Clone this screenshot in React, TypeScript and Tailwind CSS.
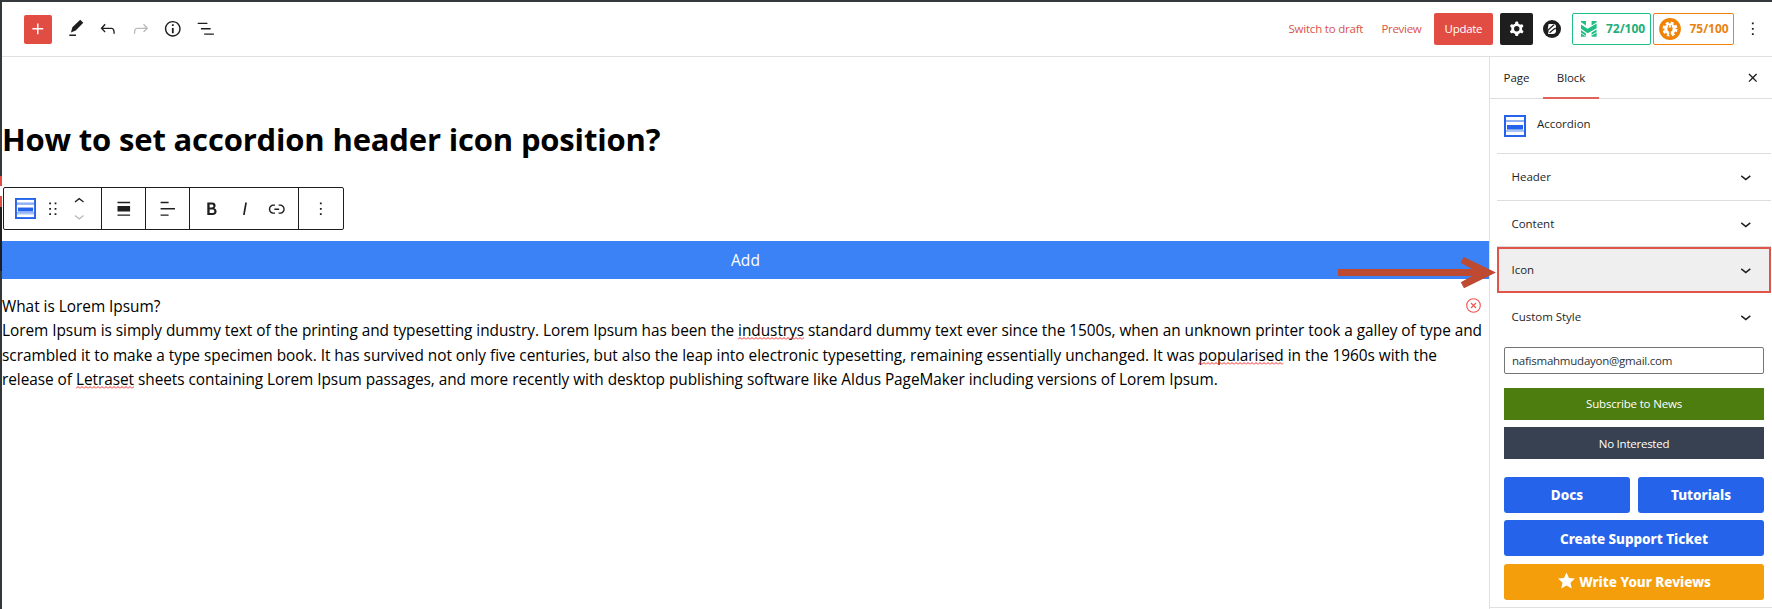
import React from "react";

type IconProps = { d: string; className?: string; evenOdd?: boolean };

function Icon({ d, className = "size-[21.6px]", evenOdd }: IconProps) {
  return (
    <svg viewBox="0 0 24 24" fill="currentColor" className={`block shrink-0 ${className}`}>
      <path d={d} fillRule={evenOdd ? "evenodd" : "nonzero"} />
    </svg>
  );
}

const PLUS = "M18 11.2h-5.2V6h-1.6v5.2H6v1.6h5.2V18h1.6v-5.2H18z";
const EDIT = "M20.3 5.2 16.9 1.9 8.2 10.4 6.6 16.1 11.9 14 20.3 5.2ZM12.2 18.4H4.8V20h7.4v-1.6Z";
const UNDO =
  "M18.3 11.7c-.6-.6-1.4-.9-2.3-.9H6.7l2.9-3.3-1.1-1-4.5 5L8.5 16l1-1-2.7-2.7H16c.5 0 .9.2 1.3.5 1 1 1 3.4 1 4.5v.3h1.5v-.2c0-1.5 0-4.3-1.5-5.7z";
const REDO =
  "M15.6 6.5l-1.1 1 2.9 3.3H8c-.9 0-1.7.3-2.3.9-1.4 1.5-1.4 4.2-1.4 5.6v.2h1.5v-.3c0-1.1 0-3.5 1-4.5.3-.3.7-.5 1.3-.5h9.2L14.5 15l1.1 1.1 4.6-4.6-4.6-5z";
const INFO =
  "M12 3.2c-4.8 0-8.8 3.9-8.8 8.8 0 4.8 3.9 8.8 8.8 8.8 4.8 0 8.8-3.9 8.8-8.8 0-4.8-4-8.8-8.8-8.8zm0 16c-4 0-7.2-3.3-7.2-7.2C4.8 8 8 4.8 12 4.8s7.2 3.3 7.2 7.2c0 4-3.2 7.2-7.2 7.2zM11 17h2v-6h-2v6zm0-8h2V7h-2v2z";
const LIST = "M13.8 5.2H3v1.5h10.8V5.2zm-3.6 12v1.5H21v-1.5H10.2zm7.2-6H6.6v1.5h10.8v-1.5z";
const COG =
  "M10.289 4.836A1 1 0 0111.275 4h1.306a1 1 0 01.987.836l.244 1.466c.787.26 1.503.679 2.108 1.218l1.393-.522a1 1 0 011.216.437l.653 1.13a1 1 0 01-.23 1.273l-1.148.944a6.025 6.025 0 010 2.435l1.149.946a1 1 0 01.23 1.272l-.653 1.13a1 1 0 01-1.216.437l-1.394-.522c-.605.54-1.32.958-2.108 1.218l-.244 1.466a1 1 0 01-.987.836h-1.306a1 1 0 01-.986-.836l-.244-1.466a5.995 5.995 0 01-2.108-1.218l-1.394.522a1 1 0 01-1.217-.436l-.653-1.131a1 1 0 01.23-1.272l1.149-.946a6.026 6.026 0 010-2.435l-1.148-.944a1 1 0 01-.23-1.272l.653-1.131a1 1 0 011.217-.437l1.393.522a5.994 5.994 0 012.108-1.218l.244-1.466zM14.929 12a3 3 0 11-6 0 3 3 0 016 0z";
const MORE = "M13 19h-2v-2h2v2zm0-6h-2v-2h2v2zm0-6h-2V5h2v2z";
const DRAG =
  "M8 7h2V5H8v2zm0 6h2v-2H8v2zm0 6h2v-2H8v2zm6-14v2h2V5h-2zm0 8h2v-2h-2v2zm0 6h2v-2h-2v2z";
const UP = "M6.5 12.4L12 8l5.5 4.4-.9 1.2L12 10l-4.5 3.6-1-1.2z";
const DOWN = "M17.5 11.6L12 16l-5.5-4.4.9-1.2L12 14l4.5-3.6 1 1.2z";
const ALIGN_NONE = "M5 15h14V9H5v6zm0 4.8h14v-1.5H5v1.5zM5 4.2v1.5h14V4.2H5z";
const ALIGN_LEFT = "M4 19.8h8.9v-1.5H4v1.5zm8.9-15.6H4v1.5h8.9V4.2zm-8.9 7v1.5h16v-1.5H4z";
const BOLD =
  "M14.7 11.3c1-.6 1.5-1.6 1.5-3 0-2.3-1.3-3.4-4-3.4H7v14h5.8c1.4 0 2.5-.3 3.3-1 .8-.7 1.2-1.7 1.2-2.9.1-1.9-.8-3.1-2.6-3.7zm-5.1-4h2.3c.6 0 1.1.1 1.4.4.3.3.5.7.5 1.2s-.2 1-.5 1.2c-.3.3-.8.4-1.4.4H9.6V7.3zm4.6 9c-.4.3-1 .4-1.7.4H9.6v-3.9h2.9c.7 0 1.3.2 1.7.5.4.3.6.8.6 1.5s-.2 1.2-.6 1.5z";
const ITALIC = "M12.5 5L10 19h1.9l2.5-14z";
const LINK =
  "M15.6 7.2H14v1.5h1.6c2 0 3.7 1.7 3.7 3.7s-1.7 3.7-3.7 3.7H14v1.5h1.6c2.8 0 5.2-2.3 5.2-5.2 0-2.9-2.3-5.2-5.2-5.2zM4.7 12.4c0-2 1.7-3.7 3.7-3.7H10V7.2H8.4c-2.9 0-5.2 2.3-5.2 5.2 0 2.9 2.3 5.2 5.2 5.2H10v-1.5H8.4c-2 0-3.7-1.7-3.7-3.7zm4.6.9h5.3v-1.5H9.3v1.5z";
const CLOSE =
  "M12 13.06l3.712 3.713 1.061-1.06L13.061 12l3.712-3.712-1.06-1.06L12 10.938 8.288 7.227l-1.061 1.06L10.939 12l-3.712 3.712 1.06 1.061L12 13.061z";

function AccordionIcon({ className }: { className: string }) {
  return (
    <svg viewBox="0 0 22 22" className={`block shrink-0 ${className}`}>
      <rect width="22" height="22" fill="#2563eb" />
      <rect x="2" y="2" width="18" height="3" fill="#fff" />
      <rect x="2" y="5" width="18" height="2" fill="#8fb0f6" />
      <rect x="2" y="7" width="18" height="8" fill="#fff" />
      <rect x="3" y="10" width="16" height="4" fill="#2563eb" />
      <rect x="3" y="14" width="16" height="1" fill="#7ba2f4" />
      <rect x="2" y="15" width="18" height="2" fill="#a9c2f8" />
      <rect x="2" y="17" width="18" height="3" fill="#fff" />
    </svg>
  );
}

function Misspelled({ children }: { children: React.ReactNode }) {
  return (
    <span className="relative inline-block leading-[24.33px]">
      {children}
      <svg className="absolute left-0 top-[18px] h-[3px] w-full">
        <defs>
          <pattern id="wave" width="4" height="3" patternUnits="userSpaceOnUse">
            <path d="M0 2.5 2 .5 4 2.5" fill="none" stroke="#f02828" strokeWidth="1" />
          </pattern>
        </defs>
        <rect width="100%" height="3" fill="url(#wave)" />
      </svg>
    </span>
  );
}

function TopBar() {
  return (
    <header className="flex h-[55px] shrink-0 items-center border-b border-[#e0e0e0] pl-[22px] text-[#1e1e1e]">
      <button className="flex h-[29px] w-7 items-center justify-center rounded-[2px] bg-[#e14d43] text-white">
        <Icon d={PLUS} />
      </button>
      <div className="ml-[13px] flex items-center gap-[10.9px]">
        <Icon d={EDIT} />
        <Icon d={UNDO} />
        <Icon d={REDO} className="size-[21.6px] text-[#bbb]" />
        <Icon d={INFO} />
        <Icon d={LIST} />
      </div>
      <div className="ml-auto flex items-center text-[12px]">
        <span className="w-[93px] text-[11.5px] tracking-[-0.2px] text-[#d9534a]">Switch to draft</span>
        <span className="w-[53px] text-[11.5px] tracking-[-0.3px] text-[#d9534a]">Preview</span>
        <button className="h-8 w-[59px] rounded-[2px] bg-[#e14d43] pr-px text-center text-[11.5px] tracking-[-0.3px] text-white">
          Update
        </button>
        <button className="ml-[7px] flex h-8 w-[33px] items-center justify-center rounded-[2px] bg-[#1e1e1e] text-white">
          <Icon d={COG} evenOdd />
        </button>
        <svg viewBox="0 0 18 18" className="ml-[10px] block size-[18px]">
          <circle cx="9" cy="9" r="9" fill="#1e1e1e" />
          <path d="M5.600 3.900h4.700c2.900 0 3.600 3 1.700 4.700 2.100 1.900 1 5.500-2.100 5.500H5L5.600 11 4.700 9.500z" fill="#fff" />
          <path d="M4.800 10.200 11 4.800M6.600 12.800 12 8.200" stroke="#1e1e1e" strokeWidth="1.200" />
        </svg>
        <div className="ml-[11px] flex h-8 w-[79px] items-center rounded-[2px] border border-[#1fbf83] text-[#22ad79]">
          <svg viewBox="0 0 16 16" className="ml-2 block size-4" fill="#1fbf83">
            <path d="M0 0h5v4.500L0 1.300zM10.600 0H15.600v1.200L10.600 4.500z" />
            <path d="M0 3.500 6.600 7.800 15.600 2.400v4.800L6.600 12.200 0 7.800z" />
            <path d="M0 9.300l5 3.300v3.200H0zM10.600 11.500l5-2.900v7.200h-5z" />
            <path d="M0 12 5 15.200M10.600 14.200 15.600 11.300" stroke="#fff" strokeWidth=".8" />
          </svg>
          <span className="ml-[8.500px] font-bold">72/100</span>
        </div>
        <div className="ml-[2px] flex h-8 w-[81px] items-center rounded-[2px] border border-[#ef8408] text-[#e88313]">
          <svg viewBox="0 0 22 22" className="ml-[5px] block size-[22px]">
            <circle cx="11" cy="11" r="10.9" fill="#f08205" />
            <circle cx="11" cy="11" r="5.8" fill="#fff" />
            <circle cx="11" cy="11" r="6.4" fill="none" stroke="#fff" strokeWidth="2.2" strokeDasharray="2.9 2.126" />
            <path d="M9.600 7.200v2.400M12.400 7.200v2.400" stroke="#f08205" strokeWidth="1" />
            <path d="M8.400 9.600h5.200v1.600a2.700 2.700 0 0 1-1.800 2.500V18h-1.600v-4.300a2.700 2.700 0 0 1-1.800-2.500z" fill="#f08205" />
          </svg>
          <span className="ml-[8px] font-bold">75/100</span>
        </div>
        <Icon d={MORE} className="ml-[8px] mr-[8px] size-[21.6px]" />
      </div>
    </header>
  );
}

function BlockToolbar() {
  const seg = "flex items-center border-r border-[#1e1e1e]";
  return (
    <div className="ml-px mt-[18px] flex h-[43px] w-[341px] rounded-[2px] border border-[#1e1e1e] text-[#1e1e1e]">
      <div className={`${seg} w-[98px] pl-[11px]`}>
        <AccordionIcon className="size-[21px]" />
        <Icon d={DRAG} className="ml-[6px] size-[21.6px]" />
        <div className="ml-[5px] flex flex-col">
          <Icon d={UP} className="-mb-[3px] size-[20.5px]" />
          <Icon d={DOWN} className="-mt-[3px] size-[20.5px] text-[#bbb]" />
        </div>
      </div>
      <div className={`${seg} w-11 justify-center`}>
        <Icon d={ALIGN_NONE} />
      </div>
      <div className={`${seg} w-11 justify-center`}>
        <Icon d={ALIGN_LEFT} />
      </div>
      <div className={`${seg} w-[109px] gap-[10.9px] pl-[11.400px]`}>
        <Icon d={BOLD} />
        <Icon d={ITALIC} />
        <Icon d={LINK} />
      </div>
      <div className="flex flex-1 items-center justify-center">
        <Icon d={MORE} />
      </div>
    </div>
  );
}

function Editor() {
  return (
    <main className="flex min-w-0 flex-1 flex-col text-black">
      <h1 className="mt-[60px] h-[52px] whitespace-nowrap text-[31px] font-bold leading-[44px] tracking-[-0.17px]">
        How to set accordion header icon position?
      </h1>
      <BlockToolbar />
      <button className="mt-[11px] h-[38px] w-full shrink-0 bg-[#3b82f6] pt-px text-[15.5px] tracking-[0.1px] text-white">
        Add
      </button>
      <div className="mt-[16px] flex justify-between pr-[8px] text-[15.4px] leading-[24.33px] tracking-[-0.02px]">
        <span>What is Lorem Ipsum?</span>
        <svg viewBox="0 0 15 15" className="mt-[3px] block size-[15px]" fill="none" stroke="#ef5350">
          <circle cx="7.5" cy="7.5" r="6.8" strokeWidth="1.1" />
          <path d="m5 5 5 5m0-5-5 5" strokeWidth="1.1" />
        </svg>
      </div>
      <div className="whitespace-nowrap text-[15.4px] leading-[24.33px]">
        <p className="tracking-[-0.043px]">
          Lorem Ipsum is simply dummy text of the printing and typesetting industry. Lorem Ipsum has been the{" "}
          <Misspelled>industrys</Misspelled> standard dummy text ever since the 1500s, when an unknown printer took a
          galley of type and
        </p>
        <p className="tracking-[-0.023px]">
          scrambled it to make a type specimen book. It has survived not only five centuries, but also the leap into
          electronic typesetting, remaining essentially unchanged. It was <Misspelled>popularised</Misspelled> in the
          1960s with the
        </p>
        <p className="tracking-[-0.048px]">
          release of <Misspelled>Letraset</Misspelled> sheets containing Lorem Ipsum passages, and more recently with
          desktop publishing software like Aldus PageMaker including versions of Lorem Ipsum.
        </p>
      </div>
    </main>
  );
}

function PanelRow({ label, className }: { label: string; className: string }) {
  return (
    <div className={`flex items-center justify-between ${className}`}>
      <span>{label}</span>
      <Icon d={DOWN} className="size-[21.6px]" />
    </div>
  );
}

function Sidebar() {
  return (
    <aside className="relative flex w-[283px] shrink-0 flex-col border-l border-[#e0e0e0] text-[11.5px] tracking-[-0.03px] text-[#1e1e1e]">
      <div className="flex h-[42px] shrink-0 items-center border-b border-[#ddd]">
        <span className="w-[53px] pl-[13.500px] pt-px">Page</span>
        <span className="-mb-px flex h-[42px] w-14 items-center justify-center border-b-2 border-[#e0635a] pt-[2px] tracking-[-0.1px]">
          Block
        </span>
        <Icon d={CLOSE} className="ml-auto mr-[8px] size-[21.6px]" />
      </div>
      <div className="flex h-[54px] shrink-0 items-start pl-[14px] pt-4">
        <AccordionIcon className="size-[22px]" />
        <span className="ml-[11px] leading-[18px]">Accordion</span>
      </div>
      <div className="ml-[7px] mr-px flex shrink-0 flex-col">
        <PanelRow label="Header" className="h-[47px] border-t border-[#ddd] pl-[14.5px] pr-[14.5px]" />
        <PanelRow label="Content" className="h-[47px] border-b border-t border-[#ddd] pl-[14.5px] pr-[14.5px]" />
        <PanelRow label="Icon" className="h-[46px] border-2 border-[#e0544a] bg-[#efefef] pl-[12.5px] pr-[12.5px]" />
        <PanelRow label="Custom Style" className="h-[47px] pl-[14.5px] pr-[14.5px]" />
      </div>
      <div className="ml-[14px] mr-2 flex flex-col">
        <div className="mt-[7px] flex h-[27px] items-center rounded-[2px] border border-[#757575] pl-[7px] pt-px tracking-[-0.24px] text-[#2c3338]">
          nafismahmudayon@gmail.com
        </div>
        <button className="mt-[14px] h-8 bg-[#4d7c0f] tracking-[-0.18px] text-white">Subscribe to News</button>
        <button className="mt-[7px] h-8 bg-[#374151] pt-px tracking-[-0.24px] text-white">No Interested</button>
        <div className="mt-[18px] grid grid-cols-2 gap-x-2 gap-y-[7px] font-['Noto_Sans','Open_Sans',sans-serif] text-[13.5px] font-extrabold tracking-[-0.03px] text-white">
          <button className="h-9 rounded-[3px] bg-[#2563eb]">Docs</button>
          <button className="h-9 rounded-[3px] bg-[#2563eb]">Tutorials</button>
          <button className="col-span-2 h-9 rounded-[3px] bg-[#2563eb] pt-[2px]">Create Support Ticket</button>
          <button className="col-span-2 mt-px flex h-9 items-center justify-center gap-1 rounded-[3px] bg-[#f59e0b] pl-px">
            <svg viewBox="0 0 24 24" className="-mt-1 size-[17px]" fill="#fff">
              <path d="m12 .6 3.5 7.8 8.3.9-6.200 5.700 1.800 8.400L12 19.100l-7.400 4.300 1.800-8.400L.2 9.300l8.300-.9z" />
            </svg>
            Write Your Reviews
          </button>
        </div>
      </div>
      <div className="mt-[7px] h-px shrink-0 bg-[#e0e0e0]" />
      <svg viewBox="0 0 158 32" className="absolute left-[-152px] top-[200px] block h-8 w-[158px]">
        <path d="M0 12h134L122.500 5.700l3.200-5.700L158 15.400l-32 15.800-3.200-6L134 19H0z" fill="#be4a31" />
      </svg>
    </aside>
  );
}

export default function App() {
  return (
    <div className="flex h-[609px] w-[1772px] overflow-hidden bg-white font-['Open_Sans','Noto_Sans',sans-serif]">
      <div className="flex w-[2px] shrink-0 flex-col bg-[#32373c]">
        <div className="mt-[176px] h-[10px] bg-[#e14d43]" />
        <div className="h-[10px] bg-white" />
        <div className="h-[11px] bg-[#e14d43]" />
        <div className="h-[64px] bg-[#1c1f22]" />
      </div>
      <div className="flex min-w-0 flex-1 flex-col border-t-2 border-[#36393e]">
        <TopBar />
        <div className="flex min-h-0 flex-1">
          <Editor />
          <Sidebar />
        </div>
      </div>
    </div>
  );
}
